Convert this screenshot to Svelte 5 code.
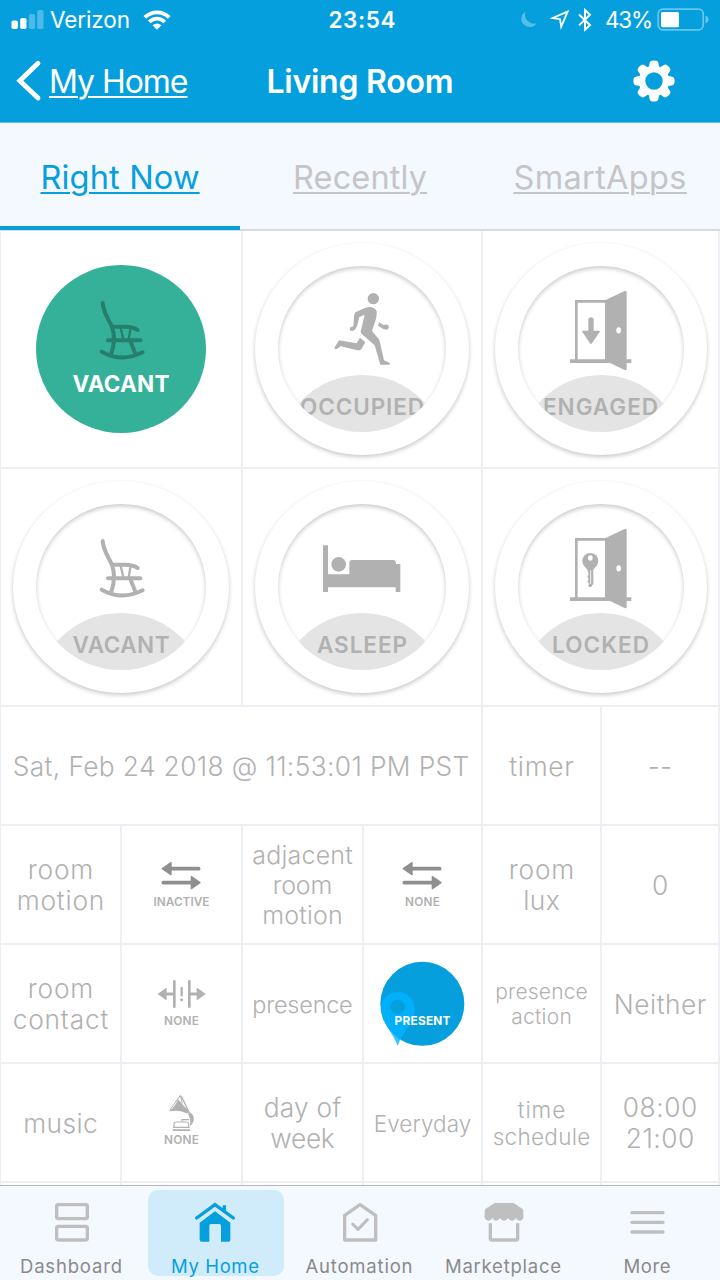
<script>
  // Spreads the letters of a label so that it takes the given width.
  function fit(node, width) {
    const natural = node.getBoundingClientRect().width;
    const gap = (width - natural) / Math.max(1, node.textContent.length - 1);
    node.style.letterSpacing = `${gap}px`;
    node.style.marginRight = `${-gap}px`;
  }

  const tabs = [
    { label: 'Right Now', w: 159, active: true },
    { label: 'Recently', w: 134 },
    { label: 'SmartApps', w: 173 }
  ];

  const dials = [
    { label: 'VACANT', w: 97, icon: 'chair', on: true, col: 'a' },
    { label: 'OCCUPIED', w: 124, icon: 'runner', col: 'b' },
    { label: 'ENGAGED', w: 115, icon: 'down', col: 'c' },
    { label: 'VACANT', w: 97, icon: 'chair', col: 'a' },
    { label: 'ASLEEP', w: 90, icon: 'bed', col: 'b' },
    { label: 'LOCKED', w: 97, icon: 'key', col: 'c' }
  ];

  const cells = [
    { lines: [['Sat, Feb 24 2018 @ 11:53:01 PM PST', 457]], size: 26.3, lh: 31, span: 4 },
    { lines: [['timer', 65]], size: 26.3, lh: 31 },
    { lines: [['--', 25]], size: 26.3, lh: 31 },

    { lines: [['room', 66], ['motion', 88]], size: 26.3, lh: 31.5 },
    { icon: 'arrows', label: 'INACTIVE', w: 56 },
    { lines: [['adjacent', 101], ['room', 60], ['motion', 81]], size: 25, lh: 30 },
    { icon: 'arrows', label: 'NONE', w: 35 },
    { lines: [['room', 66], ['lux', 37]], size: 26.3, lh: 31.5 },
    { lines: [['0', 17]], size: 26.3, lh: 31 },

    { lines: [['room', 66], ['contact', 96]], size: 26.3, lh: 31.5 },
    { icon: 'contact', label: 'NONE', w: 35 },
    { lines: [['presence', 101]], size: 23.5, lh: 29 },
    { icon: 'pin', label: 'PRESENT', w: 56 },
    { lines: [['presence', 93], ['action', 61]], size: 21, lh: 25 },
    { lines: [['Neither', 93]], size: 26.3, lh: 31 },

    { lines: [['music', 75]], size: 26.3, lh: 31 },
    { icon: 'gramophone', label: 'NONE', w: 35 },
    { lines: [['day of', 78], ['week', 65]], size: 26.3, lh: 31.5 },
    { lines: [['Everyday', 98]], size: 22.5, lh: 27 },
    { lines: [['time', 48], ['schedule', 98]], size: 22.5, lh: 27 },
    { lines: [['08:00', 75], ['21:00', 69]], size: 26.3, lh: 31.5 },
    {}, {}, {}, {}, {}, {}
  ];

  const nav = [
    { label: 'Dashboard', w: 103, icon: 'dashboard', view: '150 60 132 126' },
    { label: 'My Home', w: 89, icon: 'home', view: '579 60 132 126', active: true },
    { label: 'Automation', w: 108, icon: 'automation', view: '1013 60 132 126' },
    { label: 'Marketplace', w: 117, icon: 'market', view: '365 60 132 126' },
    { label: 'More', w: 48, icon: 'more', view: '796 60 132 126' }
  ];
</script>

<div class="screen">
  <header>
    <div class="status">
      <div class="left">
        <svg width="34" height="20" viewBox="0 0 34 20" fill="#fff">
          <rect x="0.5" y="10.5" width="6.3" height="8.5" rx="1.8" />
          <rect x="9.2" y="8" width="6.3" height="11" rx="1.8" />
          <g opacity=".28"><rect x="17.8" y="4" width="6.3" height="15" rx="1.8" /><rect x="26.2" y="0" width="6.3" height="19" rx="1.8" /></g>
        </svg>
        <span class="carrier" use:fit={80}>Verizon</span>
        <svg class="wifi" width="28" height="20" viewBox="0 0 28 20" fill="none" stroke="#fff" stroke-width="3.8">
          <path d="M1.8 7.4C8.5 .6 19.5 .6 26.2 7.4" />
          <path d="M6.2 12C10.7 7.6 17.3 7.6 21.8 12" />
          <path d="M9.6 15.2Q14 11.6 18.4 15.2L14 19.8Z" fill="#fff" stroke="none" />
        </svg>
      </div>
      <span class="time" use:fit={67}>23:54</span>
      <div class="right">
        <svg width="18" height="18" viewBox="0 0 18 18"><path d="M6.4.8A8.2 8.2 0 1 0 17.5 12.2A9 9 0 0 1 6.4.8Z" fill="#fff" opacity=".32" /></svg>
        <svg class="loc" width="20" height="20" viewBox="0 0 20 20"><path d="M17.6 1.6L2.6 8L10 9.2L11.2 16.8Z" fill="none" stroke="#fff" stroke-width="1.8" stroke-linejoin="miter" /></svg>
        <svg class="bt" width="14" height="24" viewBox="0 0 14 24"><path d="M1 6.5L12 17L7 21.8V2L12 6.8L1 17.4" fill="none" stroke="#fff" stroke-width="1.9" /></svg>
        <span class="pct" use:fit={48}>43%</span>
        <svg width="53" height="24" viewBox="0 0 53 24">
          <rect x="1.2" y="1.2" width="45" height="20.6" rx="4.5" fill="none" stroke="#fff" stroke-opacity=".4" stroke-width="1.7" />
          <rect x="4" y="4" width="18" height="15.2" rx="1.5" fill="#fff" />
          <path d="M48.5 7.6Q51.5 8.8 51.5 11.6T48.5 15.6Z" fill="#fff" opacity=".4" />
        </svg>
      </div>
    </div>
    <div class="bar">
      <div class="back">
        <svg width="26" height="42" viewBox="0 0 26 42"><path d="M22 3.3L3.8 20.7L22 38" fill="none" stroke="#fff" stroke-width="4.8" stroke-linecap="round" stroke-linejoin="miter" /></svg>
        <span class="backlabel" use:fit={139.5}>My Home</span>
      </div>
      <h1 use:fit={187}>Living Room</h1>
      <div class="gear">
        <svg width="42" height="42" viewBox="-21 -21 42 42">
          <circle r="12" fill="none" stroke="#fff" stroke-width="6.6" />
          {#each [0, 45, 90, 135, 180, 225, 270, 315] as a}
            <path d="M-5.4-12.5L-4.3-18.2Q-3.9-20.6 0-20.6T4.3-18.2L5.4-12.5Z" fill="#fff" transform={`rotate(${a})`} />
          {/each}
        </svg>
      </div>
    </div>
  </header>

  <div class="tabs">
    {#each tabs as t}
      <div class="tab" class:active={t.active}><span use:fit={t.w}>{t.label}</span></div>
    {/each}
  </div>

  <main>
    {#each dials as d}
      <section class="cell wide">
        <div class={`dial ${d.col}`} class:on={d.on}>
          <div class="inner">
            {#if !d.on}<div class="dome"></div>{/if}
            <svg class="pict" width="100" height="80" viewBox={d.col === 'a' ? '213 167 300 240' : d.col === 'b' ? '216 167 300 240' : '213 167 300 240'}>
              {#if d.icon === 'chair'}
                <g fill="none" stroke="currentColor" stroke-width="12" stroke-linecap="round">
                  <path d="M308 218C311 252 328 268 336 290C347 320 343 343 334 370" />
                  <path d="M338 289H374Q400 289 413 299M324 330H421M392 334L406 370M305 364Q365 398 428 366" />
                  <path d="M362 292L370 327M392 292L386 327" stroke-width="7" />
                </g>
              {:else if d.icon === 'runner'}
                <g fill="currentColor">
                  <circle cx="400" cy="205" r="17" />
                  <path d="M346 246L376 232Q400 225 410 242Q412 256 404 278L396 302L418 328L432 390L449 398V403H421L404 345L366 312Q360 306 364 296L374 253L358 260L352 285Q346 300 340 301H331Q327 296 331 291L340 288L342 256Z" />
                  <path d="M360 322L376 336L364 357Q360 361 352 360L302 348L290 356H284V351L297 330L350 339Z" />
                  <path d="M418 276L430 284Q440 280 446 286Q448 295 440 298Q428 297 414 286Z" />
                </g>
              {:else if d.icon === 'bed'}
                <g fill="currentColor" transform="translate(0 6)">
                  <circle cx="296" cy="282" r="22" />
                  <path d="M249 225H264V312H328V277Q328 269 336 269H460Q468 269 468 281H481V365H467V351H264V365H249Z" />
                </g>
              {:else}
                <g fill="currentColor">
                  <path d="M289 390V213H378" fill="none" stroke="currentColor" stroke-width="8" />
                  <path d="M375 210L434 182Q440 180 440 186V387H454V398H440V416Q440 421 434 419L390 398H270V387H375Z" />
                  <ellipse cx="416" cy="300" rx="7" ry="9.5" fill="#fff" />
                  {#if d.icon === 'down'}
                    <path d="M333 269V305" stroke="currentColor" stroke-width="16" stroke-linecap="round" />
                    <path d="M308 301H358Q361 302 359 305L336 339Q333 343 330 339L307 305Q305 302 308 301Z" />
                  {:else}
                    <circle cx="331" cy="278" r="24" />
                    <path d="M315 294H347L340 305V348L336 351V354L329 357L324 352L328 346L322 340L326 333L322 325L326 318L322 304Z" />
                    <ellipse cx="331" cy="269" rx="7" ry="8" fill="#fff" />
                    <path d="M332 306V347" stroke="#fff" stroke-width="2.5" />
                  {/if}
                </g>
              {/if}
            </svg>
            <div class="name"><span use:fit={d.w}>{d.label}</span></div>
          </div>
        </div>
      </section>
    {/each}

    {#each cells as c}
      <section class="cell" class:four={c.span} class:iconic={c.icon}>
        {#if c.lines}
          {#each c.lines as [text, w]}
            <div class="line" style={`font-size:${c.size}px;line-height:${c.lh}px`}><span use:fit={w - 0.5}>{text}</span></div>
          {/each}
        {:else if c.icon === 'pin'}
          <svg class="pinart" width="117" height="117" viewBox="12 375 351 351">
            <circle cx="187" cy="551.5" r="126" fill="#069fde" />
            <path d="M113 516C143 516 165 540 164 570C160 613 124 640 113 678C101 640 63 603 63 566C63 538 85 516 113 516ZM113 539A22 22 0 1 0 113.1 539Z" fill="#00b4ff" fill-opacity=".8" fill-rule="evenodd" />
          </svg>
          <div class="small light"><span use:fit={c.w}>{c.label}</span></div>
        {:else if c.icon}
          {#if c.icon === 'arrows'}
            <svg width="50" height="38" viewBox="471 108 150 114" fill="#8f8f8f" stroke="#8f8f8f">
              <path d="M515 146H596M490 188H575" stroke-width="11" stroke-linecap="round" />
              <path d="M487 146L513 128V164ZM600 188L574 170V206Z" stroke-width="4" stroke-linejoin="round" />
            </svg>
          {:else if c.icon === 'contact'}
            <svg width="50" height="38" viewBox="471 465 150 114" fill="#b1b1b1" stroke="#b1b1b1">
              <path d="M523 484V560M568 484V560" stroke-width="8" stroke-linecap="round" />
              <path d="M498 522H523M568 522H592" stroke-width="9" />
              <path d="M476 522L498 506V538ZM614 522L592 506V538Z" stroke-width="4" stroke-linejoin="round" />
              <path d="M545 504V526" stroke-width="7" stroke-linecap="round" /><circle cx="545" cy="539" r="4.5" stroke="none" />
            </svg>
          {:else}
            <svg width="50" height="38" viewBox="471 822 150 114" fill="#b1b1b1">
              <path d="M534 838L568 876Q563 883 556 878Q536 869 507 874Q525 862 534 838Z" />
              <path d="M509 871L541 826L547 850" fill="none" stroke="#b1b1b1" stroke-width="3" />
              <path d="M544 828L567 877" fill="none" stroke="#b1b1b1" stroke-width="4" />
              <path d="M568 876Q584 884 581 902Q578 913 570 918Q574 896 564 882Z" />
              <path d="M522 922V912Q522 906 529 906H559Q566 906 566 912V922M547 899H568M546 897V904" fill="none" stroke="#b1b1b1" stroke-width="3.5" />
              <path d="M519 920H569V924H519ZM518 928H570V933H518Z" />
            </svg>
          {/if}
          <div class="small"><span use:fit={c.w}>{c.label}</span></div>
        {/if}
      </section>
    {/each}
  </main>

  <nav>
    {#each nav as n}
      <div class="item" class:active={n.active}>
        <svg width="44" height="42" viewBox={n.view} fill="none" stroke="currentColor" stroke-width="10" stroke-linecap="round" stroke-linejoin="round">
          {#if n.icon === 'dashboard'}
            <rect x="170" y="74" width="92" height="42" rx="5" /><rect x="170" y="139" width="92" height="41" rx="5" />
          {:else if n.icon === 'home'}
            <path d="M590 114L645 74L700 114" stroke-linejoin="miter" />
            <path d="M668 76H678V98L668 91Z" fill="currentColor" stroke="none" />
            <path d="M645 94L691 128V179Q691 185 685 185H663V137Q663 132 658 132H633Q628 132 628 137V185H605Q599 185 599 179V128Z" fill="currentColor" stroke="none" />
          {:else if n.icon === 'automation'}
            <path d="M1033 180V106L1079 74L1126 106V180Z" /><path d="M1057 132L1073 148L1101 119" stroke-width="9" />
          {:else if n.icon === 'market'}
            <path d="M403 69H460L486 86Q489 88 489 92V113Q486 122 478 122Q471 122 467 114Q463 122 455 122T443 114Q439 122 431 122T419 114Q415 122 407 122T396 114Q392 122 384 122T373 112V92Q373 88 376 86Z" fill="currentColor" stroke="none" />
            <path d="M390 130V176Q390 180 395 180H467Q472 180 472 176V130" stroke-linecap="butt" />
          {:else}
            <path d="M814 98H907M814 127H907M814 156H907" />
          {/if}
        </svg>
        <div class="navlabel"><span use:fit={n.w - 1}>{n.label}</span></div>
      </div>
    {/each}
  </nav>
</div>

<style>
  :global(body) { background: #fff; }
  .screen {
    width: 720px; height: 1280px; overflow: hidden; display: flex; flex-direction: column;
    font-family: Inter, "Liberation Sans", sans-serif; background: #fff;
  }
  span, h1 { white-space: pre; }
  span { display: inline-block; }
  svg { display: block; flex: none; overflow: visible; }

  header { height: 122px; background: #069fde; color: #fff; border-bottom: 1px solid #5fbce6; flex: none; }
  .status { height: 39px; display: grid; grid-template-columns: 1fr auto 1fr; align-items: center; font-size: 22.5px; }
  .left { display: flex; align-items: center; padding-left: 11px; }
  .carrier { margin-left: 5px; }
  .wifi { margin-left: 13px; }
  .time { font-weight: 600; position: relative; left: 2px; }
  .right { display: flex; align-items: center; justify-content: flex-end; padding-right: 10px; }
  .loc { margin-left: 13px; }
  .bt { margin: 0 13px 0 8px; }
  .pct { margin-right: 5px; }
  .right > :last-child { margin-left: 4px; }
  .bar { height: 84px; display: grid; grid-template-columns: 1fr auto 1fr; align-items: center; }
  .back { display: flex; align-items: center; padding-left: 16px; }
  .backlabel { font-size: 32px; line-height: 40px; font-weight: 400; margin-left: 7px; padding-top: 1px; text-decoration: underline; text-decoration-thickness: 2px; text-underline-offset: 3px; }
  h1 { margin: 0; padding-top: 1px; font-size: 32px; line-height: 40px; font-weight: 600; }
  .gear { display: flex; justify-content: flex-end; padding-right: 45px; }

  .tabs { height: 107px; flex: none; display: grid; grid-template-columns: repeat(3, 240px); background: #f4f8ff; }
  .tab { display: flex; align-items: center; justify-content: center; border-bottom: 1px solid #d6d9e0; padding-top: 3px; color: #c5c5c8; font-size: 32.5px; line-height: 40px; font-weight: 400; }
  .tab span { text-decoration: underline; text-decoration-thickness: 2px; text-underline-offset: 3px; }
  .tab.active { color: #069fde; border-bottom: 4px solid #069fde; padding-top: 6px; }

  main {
    flex: none; height: 955px; overflow: hidden; display: grid; box-sizing: border-box;
    border-left: 1px solid #eceef3; border-top: 1px solid #dadde5;
    grid-template-columns: 121px 121px 121px 119px 119px 118px;
    grid-template-rows: 238px 238px 119px 119px 119px 119px 30px;
  }
  .cell {
    border-right: 2px solid #eeeff4; border-bottom: 2px solid #eeeff4; min-width: 0;
    display: flex; flex-direction: column; align-items: center; justify-content: center; color: #b1b1b1;
  }
  .wide { grid-column: span 2; }
  .four { grid-column: span 4; }
  .line { font-weight: 300; display: flex; justify-content: center; position: relative; top: 0.6px; }

  .dial {
    display: flex; align-items: center; justify-content: center; border-radius: 50%;
    width: 214px; height: 212px; background: #fff; box-shadow: 0 2px 4px rgba(0, 0, 0, .22);
  }
  .dial.a { width: 216px; }
  .dial.c { width: 212px; }
  .inner {
    width: 168px; height: 166px; border-radius: 50%; overflow: hidden; position: relative;
    display: flex; flex-direction: column; align-items: center; box-shadow: inset 0 2px 4px rgba(0, 0, 0, .22);
  }
  .dial.a .inner { width: 170px; }
  .dial.c .inner { width: 166px; }
  .dome { position: absolute; left: 0; right: 0; top: 109px; height: 166px; border-radius: 50%; background: #e4e4e4; }
  .pict { margin-top: 20px; position: relative; }
  .name { position: relative; margin-top: 27px; font-size: 22.5px; line-height: 28px; font-weight: 600; display: flex; justify-content: center; }
  .dial.on { box-shadow: none; color: #267f6c; }
  .dial.on .inner { height: 168px; background: #35b19a; box-shadow: none; }
  .dial.on .name { color: #fff; font-weight: 700; margin-top: 5px; }
  .dial.on .pict { margin-top: 21px; }
  .dial.on .name { margin-top: 4px; }
  .dial:not(.on) .name { margin-top: 27px; }

  .iconic { display: grid; justify-items: center; align-content: start; grid-template-columns: 100%; padding-top: 30px; grid-template-rows: 38px 16px; box-sizing: border-box; }
  .small { font-size: 11.8px; line-height: 14px; font-weight: 600; display: flex; justify-content: center; }
  .pinart { grid-area: 1 / 1; align-self: start; margin-top: -30px; }
  .small.light { grid-area: 2 / 1; color: #fff; font-weight: 700; position: relative; }

  nav { flex: none; height: 95px; border-top: 1px solid #b5b6c0; background: #f4f8ff; display: flex; padding-top: 4px; box-sizing: border-box; }
  .item { width: 136px; height: 86px; margin-right: 8px; flex: none; border-radius: 10px; display: flex; flex-direction: column; align-items: center; padding-top: 10px; box-sizing: border-box; color: #bfbfbf; }
  .item:nth-child(1) { margin-left: 3px; }
  .item:nth-child(2) { margin-left: 1px; }
  .item:nth-child(3) { margin-left: -1px; }
  .item > svg { margin-left: 1px; }
  .navlabel { margin-top: 13px; font-size: 18.5px; line-height: 22px; font-weight: 400; color: #8a8a8a; display: flex; justify-content: center; }
  .item.active { background: #d0ebf9; color: #069fde; }
  .item.active > svg { margin-left: -2px; }
  .active .navlabel { color: #069fde; margin-left: -2px; }
</style>
